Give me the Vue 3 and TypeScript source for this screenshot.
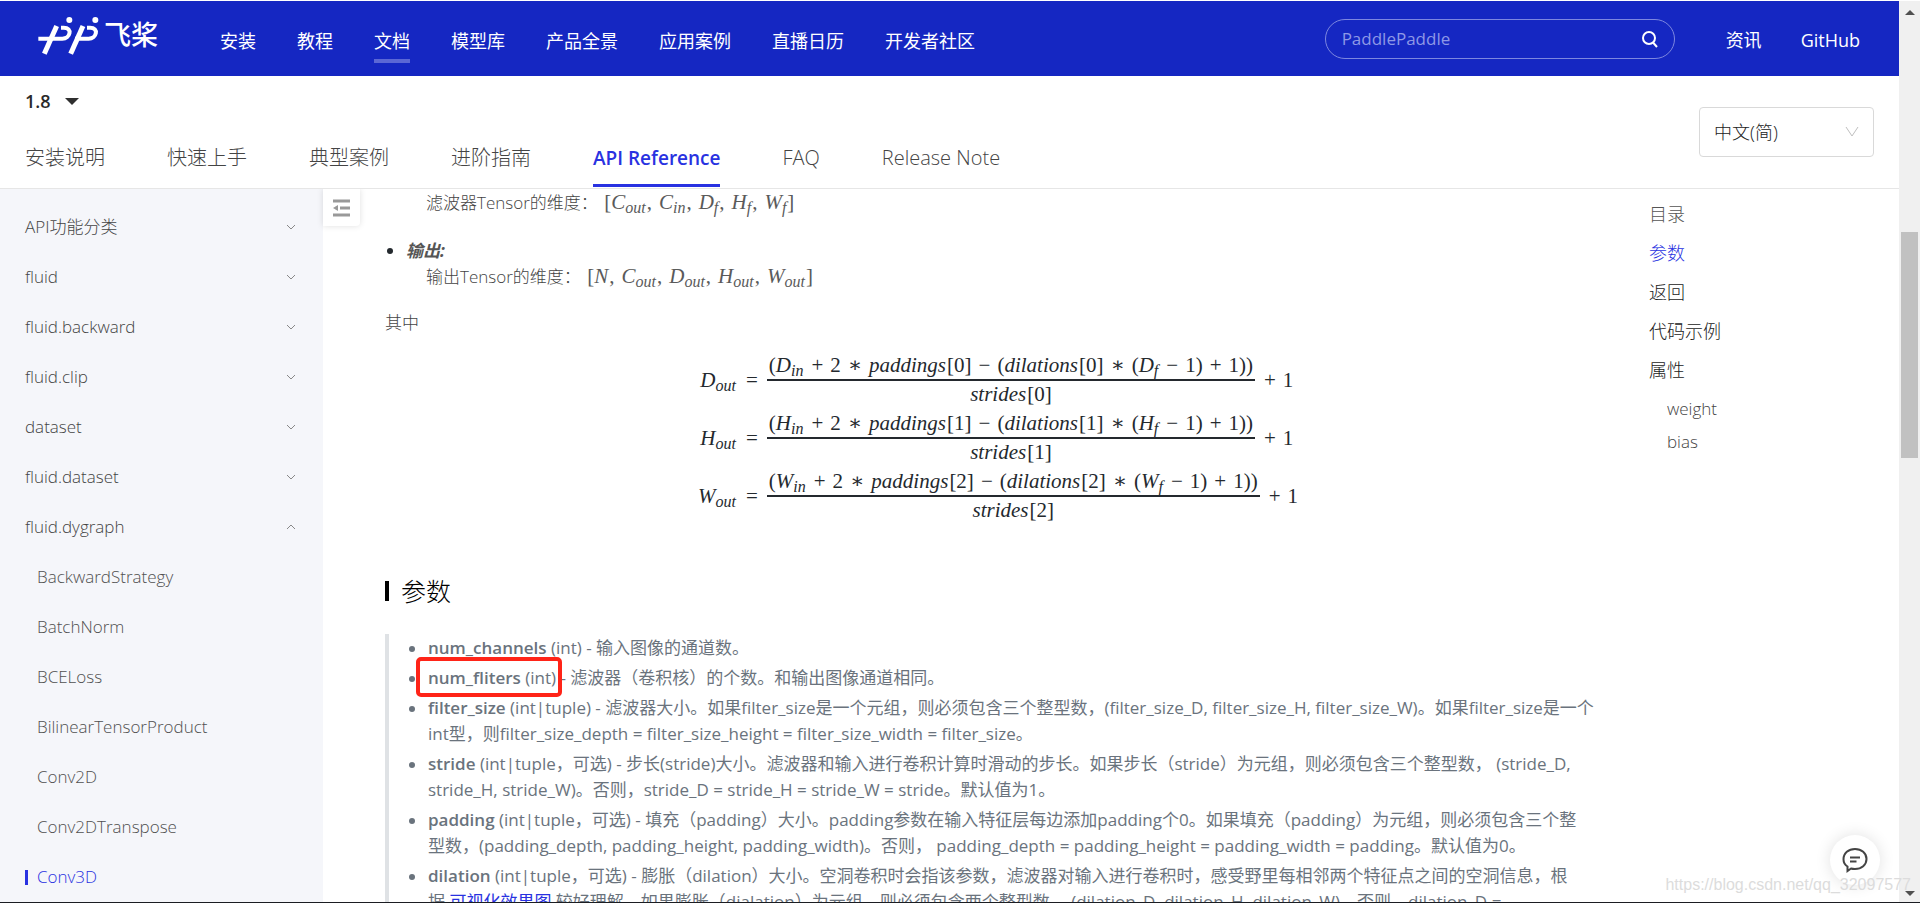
<script setup lang="ts">
import { ref } from 'vue'

interface Param { name: string; lines: string[] }

const navItems = ['安装', '教程', '文档', '模型库', '产品全景', '应用案例', '直播日历', '开发者社区']
const docTabs = ['安装说明', '快速上手', '典型案例', '进阶指南', 'API Reference', 'FAQ', 'Release Note']
const groups = ['API功能分类', 'fluid', 'fluid.backward', 'fluid.clip', 'dataset', 'fluid.dataset', 'fluid.dygraph']
const apiPages = ['BackwardStrategy', 'BatchNorm', 'BCELoss', 'BilinearTensorProduct', 'Conv2D', 'Conv2DTranspose', 'Conv3D']
const toc = ['参数', '返回', '代码示例', '属性']
const dims = ['D', 'H', 'W']
const params: Param[] = [
  { name: 'num_channels', lines: [' (int) - 输入图像的通道数。'] },
  { name: 'num_fliters', lines: [' (int) - 滤波器（卷积核）的个数。和输出图像通道相同。'] },
  {
    name: 'filter_size',
    lines: [
      ' (int|tuple) - 滤波器大小。如果filter_size是一个元组，则必须包含三个整型数，(filter_size_D, filter_size_H, filter_size_W)。如果filter_size是一个',
      'int型，则filter_size_depth = filter_size_height = filter_size_width = filter_size。',
    ],
  },
  {
    name: 'stride',
    lines: [
      ' (int|tuple，可选) - 步长(stride)大小。滤波器和输入进行卷积计算时滑动的步长。如果步长（stride）为元组，则必须包含三个整型数， (stride_D,',
      'stride_H, stride_W)。否则，stride_D = stride_H = stride_W = stride。默认值为1。',
    ],
  },
  {
    name: 'padding',
    lines: [
      ' (int|tuple，可选) - 填充（padding）大小。padding参数在输入特征层每边添加padding个0。如果填充（padding）为元组，则必须包含三个整',
      '型数，(padding_depth, padding_height, padding_width)。否则， padding_depth = padding_height = padding_width = padding。默认值为0。',
    ],
  },
]
const lang = ref('zh')
const keyword = ref('')
</script>

<template>
  <div class="window">
    <div class="page">
      <header class="topbar">
        <a href="#" class="logo" aria-label="飞桨">
          <svg class="mark" viewBox="0 0 192 120" aria-hidden="true">
            <g fill="none" stroke="#fff" stroke-width="15">
              <path d="M59 33 L22 116" />
              <path d="M138 33 L101 116" />
              <path stroke-width="12" d="M4 71 H76 C100 71 108 38 80 38 H72" />
              <path stroke-width="12" d="M114 71 H155 C179 71 187 38 159 38 H150" />
            </g>
            <circle cx="97" cy="15" r="9" fill="#fff" />
            <circle cx="175" cy="15" r="9" fill="#fff" />
          </svg>
          <span class="brand">飞桨</span>
        </a>
        <nav class="mainnav">
          <a v-for="n in navItems" :key="n" href="#" :class="{ on: n === '文档' }">{{ n }}</a>
        </nav>
        <div class="search">
          <input v-model="keyword" type="text" placeholder="PaddlePaddle" aria-label="搜索" />
          <button type="button" aria-label="搜索">
            <svg viewBox="0 0 18 18"><circle cx="8" cy="8" r="6" /><path d="M12 12.500 L16 17" /></svg>
          </button>
        </div>
        <nav class="sidenav">
          <a href="#">资讯</a>
          <a href="#">GitHub</a>
        </nav>
      </header>

      <div class="docbar">
        <div class="docleft">
          <button type="button" class="version">1.8<span class="caret"></span></button>
          <nav class="tabs">
            <a v-for="t in docTabs" :key="t" href="#" :class="{ on: t === 'API Reference' }">{{ t }}</a>
          </nav>
        </div>
        <div class="lang">
          <select v-model="lang" aria-label="语言">
            <option value="zh">中文(简)</option>
            <option value="en">English</option>
          </select>
          <svg viewBox="0 0 14 12" aria-hidden="true"><path d="M1 1 L7 10 L13 1" /></svg>
        </div>
      </div>

      <div class="body">
        <aside class="sidebar">
          <a v-for="g in groups" :key="g" href="#" class="group">
            <span>{{ g }}</span>
            <svg viewBox="0 0 10 8" aria-hidden="true">
              <path :d="g === 'fluid.dygraph' ? 'M1 6 L5 2 L9 6' : 'M1 2 L5 6 L9 2'" />
            </svg>
          </a>
          <a v-for="p in apiPages" :key="p" href="#" class="leaf" :class="{ on: p === 'Conv3D' }">{{ p }}</a>
        </aside>

        <div class="gutter">
          <button type="button" class="fold" aria-label="收起目录">
            <svg viewBox="0 0 18 18"><path d="M0 2 H17 M7 9 H17 M0 16 H17" /><path class="tip" d="M5 6 V12 L0 9 Z" /></svg>
          </button>
        </div>

        <main class="content">
          <p class="shape">滤波器Tensor的维度： <span class="tex">[<i>C<sub>out</sub></i>,<i>C<sub>in</sub></i>,<i>D<sub>f</sub></i>,<i>H<sub>f</sub></i>,<i>W<sub>f</sub></i>]</span></p>
          <ul class="outer">
            <li><strong>输出:</strong></li>
          </ul>
          <p class="shape">输出Tensor的维度： <span class="tex">[<i>N</i>,<i>C<sub>out</sub></i>,<i>D<sub>out</sub></i>,<i>H<sub>out</sub></i>,<i>W<sub>out</sub></i>]</span></p>
          <p class="where">其中</p>
          <div class="formulas">
            <template v-for="(d, k) in dims" :key="d">
              <span class="lhs"><i>{{ d }}<sub>out</sub></i></span>
              <span class="eq">=</span>
              <span class="rhs">
                <span class="frac">
                  <span class="num">(<i>{{ d }}<sub>in</sub></i><b>+</b>2<b>∗</b><i>paddings</i>[{{ k }}]<b>−</b>(<i>dilations</i>[{{ k }}]<b>∗</b>(<i>{{ d }}<sub>f</sub></i><b>−</b>1)<b>+</b>1))</span>
                  <span class="den"><i>strides</i>[{{ k }}]</span>
                </span>
                <span class="plus"><b>+</b>1</span>
              </span>
            </template>
          </div>
          <h2>参数</h2>
          <ul class="params">
            <li v-for="p in params" :key="p.name">
              <strong>{{ p.name }}</strong><template v-for="(l, i) in p.lines" :key="i"><br v-if="i > 0" />{{ l }}</template>
              <span v-if="p.name === 'num_fliters'" class="redbox"></span>
            </li>
            <li>
              <strong>dilation</strong> (int|tuple，可选) - 膨胀（dilation）大小。空洞卷积时会指该参数，滤波器对输入进行卷积时，感受野里每相邻两个特征点之间的空洞信息，根<br />据 <a href="#">可视化效果图</a> 较好理解。如果膨胀（dialation）为元组，则必须包含两个整型数， (dilation_D, dilation_H, dilation_W)。否则，dilation_D =
            </li>
          </ul>
        </main>

        <nav class="toc">
          <span class="title">目录</span>
          <a v-for="t in toc" :key="t" href="#" :class="{ on: t === '参数' }">{{ t }}</a>
          <div class="subs">
            <a href="#">weight</a>
            <a href="#">bias</a>
          </div>
        </nav>
      </div>
    </div>

    <div class="scroll" aria-hidden="true">
      <span class="arrow up"></span>
      <span class="thumb"></span>
      <span class="arrow down"></span>
    </div>

    <button type="button" class="chat" aria-label="反馈">
      <svg viewBox="0 0 26 26"><path d="M5.500 24 V19.500 C3 18 1.500 15.500 1.500 12.300 C1.500 6 6.500 2 13 2 C19.500 2 24.500 6 24.500 12 C24.500 18 19.500 22 13 22 C11.500 22 10.200 21.900 9 21.500 Z" /><path d="M8 10.500 H18 M8 14.500 H14.500" /></svg>
    </button>
    <span class="watermark">https://blog.csdn.net/qq_32097577</span>
  </div>
</template>

<style>
body { margin: 0; overflow: hidden; }
</style>

<style scoped>
* { box-sizing: border-box; }
.window {
  position: relative;
  display: flex;
  height: 100vh;
  overflow: hidden;
  border-top: 1px solid #fff;
  border-bottom: 1px solid #1b1d22;
  background: #fff;
  font: 300 17px/26px "Open Sans", "Noto Sans CJK SC", sans-serif;
  color: #444;
}
a { color: inherit; text-decoration: none; }
button, input, select { font: inherit; color: inherit; border: 0; background: none; padding: 0; margin: 0; outline: 0; }
svg { fill: none; stroke: currentColor; display: block; }
ul { list-style: none; margin: 0; padding: 0; }
.page { flex: 1; min-width: 0; display: flex; flex-direction: column; }

.topbar {
  display: flex;
  align-items: center;
  flex: none;
  height: 75px;
  padding: 0 39px 0 37px;
  background: #1527c2;
  color: #fff;
  font-size: 18px;
  font-weight: 400;
}
.logo { display: flex; align-items: center; width: 183px; padding-bottom: 8px; }
.mark { width: 64px; height: 40px; stroke: none; }
.brand { font-size: 27px; line-height: 40px; font-weight: 500; margin-left: 3px; }
.mainnav { display: flex; gap: 41px; flex: 1; padding-top: 10px; }
.mainnav a { padding: 1px 0 3px; line-height: 30px; border-bottom: 4px solid transparent; }
.mainnav a.on { border-color: #5b67d5; }
.search {
  display: flex;
  align-items: center;
  width: 350px;
  height: 40px;
  padding: 0 15px 0 16px;
  border: 1px solid #7d87e0;
  border-radius: 20px;
}
.search input { flex: 1; min-width: 0; font-size: 17px; }
.search input::placeholder { color: #8e98e6; opacity: 1; }
.search button { width: 18px; height: 18px; }
.search svg { stroke-width: 2; }
.sidenav { display: flex; gap: 39px; margin-left: 51px; padding-top: 3px; }

.docbar {
  display: flex;
  justify-content: space-between;
  flex: none;
  height: 113px;
  padding: 0 25px;
  border-bottom: 1px solid #e6e6e6;
}
.docleft { display: flex; flex-direction: column; justify-content: space-between; }
.version { display: flex; align-items: center; gap: 14px; align-self: flex-start; padding-top: 12px; font-size: 18px; font-weight: 600; color: #2a2a2a; }
.caret { border: 7px solid transparent; border-top-color: #2f2f2f; border-bottom: 0; }
.tabs { display: flex; gap: 62px; font-size: 20px; line-height: 30px; }
.tabs a { padding-bottom: 11px; border-bottom: 3px solid transparent; margin-bottom: 1px; white-space: nowrap; }
.tabs a.on { color: #2932e1; border-color: #2932e1; font-weight: 600; font-size: 19px; }
.lang { position: relative; align-self: flex-start; width: 175px; margin-top: 31px; }
.lang select { appearance: none; width: 100%; height: 50px; padding: 0 14px; border: 1px solid #d9d9d9; border-radius: 4px; font-size: 18px; color: #222; }
.lang svg { position: absolute; right: 15px; top: 19px; width: 14px; height: 12px; stroke: #bfbfbf; }

.body { display: flex; flex: 1; min-height: 0; overflow: hidden; }
.sidebar { flex: none; width: 323px; padding: 13px 27px 0 25px; background: #f5f6fa; color: #444; }
.group { display: flex; justify-content: space-between; align-items: center; line-height: 50px; height: 50px; }
.group svg { width: 10px; height: 8px; stroke: #888; }
.leaf { display: block; line-height: 50px; height: 50px; padding-left: 12px; color: #505050; }
.leaf.on { display: flex; align-items: center; padding-left: 0; gap: 9px; color: #2932e1; }
.leaf.on::before { content: ""; width: 3px; height: 15px; background: #2932e1; }
.gutter { flex: none; width: 62px; }
.fold { display: grid; place-items: center; width: 37px; height: 37px; border-radius: 0 0 4px; box-shadow: 0 0 6px #00000020; color: #999; }
.fold svg { width: 18px; height: 18px; stroke-width: 3; }
.fold .tip { fill: currentColor; stroke: none; }

.content { flex: 1; min-width: 0; }
.content p { margin: 0; }
.shape { padding-left: 41px; white-space: nowrap; }
.shape:first-child { padding-top: 1px; }
.tex, .formulas { font-family: "Liberation Serif", "DejaVu Serif", serif; font-weight: 400; font-size: 21px; }
.tex { margin-left: 2px; line-height: 20px; color: #5a5a5a; }
.tex i { margin-right: 1px; }
.tex i + i { margin-left: 7px; }
sub { font-size: 16px; line-height: 0; vertical-align: -4px; }
.outer { margin-top: 22px; }
.outer li { display: flex; align-items: center; gap: 13px; padding-left: 2px; }
.outer li::before { content: ""; width: 6px; height: 6px; border-radius: 50%; background: #24292e; }
.outer strong { font-weight: 700; font-style: italic; color: #555; }
.content .where { margin-top: 20px; }
.formulas {
  display: grid;
  grid-template-columns: auto auto auto;
  justify-content: center;
  align-items: center;
  row-gap: 1px;
  margin-top: 15px;
  padding-right: 38px;
  line-height: 28px;
  color: #24292e;
  white-space: nowrap;
}
.lhs { text-align: right; }
.eq { padding: 0 9px; }
.rhs { display: flex; align-items: center; }
.frac { text-align: center; }
.num, .den { display: block; padding: 0 2px; }
.num { border-bottom: 2px solid #24292e; }
.den { line-height: 27px; }
.formulas b { font-weight: 400; padding: 0 7px; }
.plus { padding-left: 2px; }
.formulas i { padding-right: 1px; }
.content h2 { display: flex; align-items: center; gap: 12px; margin: 49px 0 0; font-size: 25px; line-height: 36px; font-weight: 300; color: #000; }
.content h2::before { content: ""; width: 4px; height: 20px; background: #000; }
.params { margin-top: 25px; padding: 1px 0 0 39px; border-left: 4px solid #dfe2e5; color: #6a737d; font-weight: 400; white-space: nowrap; }
.params li { position: relative; margin-bottom: 4px; }
.params li::before { content: ""; position: absolute; left: -19px; top: 11px; width: 6px; height: 6px; border-radius: 50%; background: #6a737d; }
.params strong { font-weight: 600; }
.params a { color: #2932e1; text-decoration: underline; }
.redbox { position: absolute; left: -12px; top: -8px; width: 146px; height: 40px; border: 4px solid #ff2418; border-radius: 5px; }

.toc { flex: none; display: flex; flex-direction: column; width: 250px; padding-top: 6px; color: #222; font-size: 18px; line-height: 39px; }
.toc .title { color: #555; }
.toc a.on { color: #2932e1; }
.subs { display: flex; flex-direction: column; margin-top: 2px; padding-left: 18px; line-height: 33px; font-size: 17px; color: #444; }

.scroll { flex: none; display: flex; flex-direction: column; align-items: center; width: 21px; padding: 9px 0 6px; background: #f0f0f0; }
.arrow { border: 5px solid transparent; }
.up { border-top: 0; border-bottom-color: #505050; }
.down { border-bottom: 0; border-top-color: #505050; margin-top: auto; }
.thumb { width: 17px; height: 226px; margin-top: 217px; background: #c1c1c1; }
.chat { position: absolute; right: 40px; bottom: 17px; display: grid; place-items: center; width: 50px; height: 50px; border-radius: 50%; background: #fff; box-shadow: 0 0 16px #0000001f; color: #444; }
.chat svg { width: 26px; height: 26px; stroke-width: 2; }
.watermark { position: absolute; right: 9px; bottom: 5px; font: 400 16px/24px "Liberation Sans", sans-serif; color: #dcdcdc; }
</style>
